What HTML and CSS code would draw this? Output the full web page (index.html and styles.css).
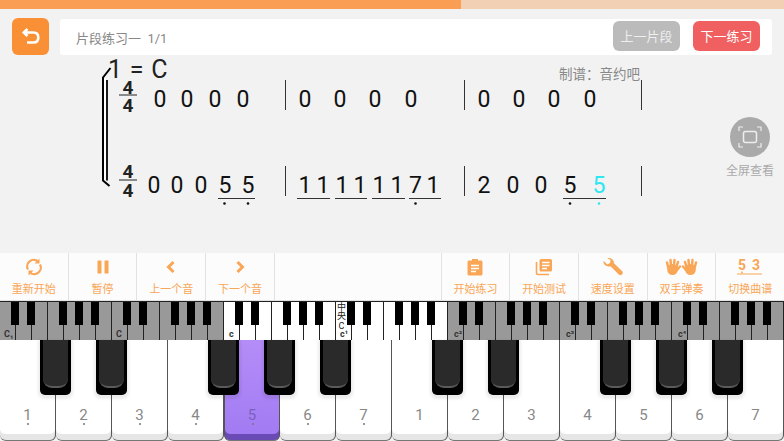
FILE: index.html
```html
<!DOCTYPE html>
<html lang="zh-CN">
<head>
    <meta charset="UTF-8">
    <meta name="viewport" content="width=device-width, initial-scale=1.0">
    <title>片段练习</title>
    <link rel="stylesheet" href="styles.css">
</head>
<body>
    <div class="progress"><div class="progress-fill"></div></div>

    <header class="top">
        <button class="back-btn">
            <svg width="20" height="18" viewBox="0 0 20 18"><path d="M6.500 1 2.800 4.500 6.500 8M3 4.500H12.500C15.500 4.500 17.300 6.500 17.300 9.500 17.300 12.500 15.500 14.500 12.500 14.500H6" fill="none" stroke="#fff" stroke-width="2.600"/></svg>
        </button>
        <div class="title-bar">
            <span class="title">片段练习一&nbsp;&nbsp;1/1</span>
            <button class="seg-btn prev">上一片段</button>
            <button class="seg-btn next">下一练习</button>
        </div>
    </header>

    <main class="score-area">
        <svg class="score" width="784" height="198" viewBox="0 55 784 198">
            <text class="key-sig" x="108" y="78">1 = C</text>

            <path d="M110.500 68 103 77.500V180.500L109.500 186" fill="none" stroke="#000" stroke-width="2"/>
            <path d="M104 78.500H106V180H104Z" fill="#fff"/>
            <path d="M107 80V180.500" fill="none" stroke="#000" stroke-width="1.800"/>

            <text class="time" x="128" y="93.500">4</text>
            <path d="M119 95H137M119 180H137" stroke="#222" stroke-width="1.200"/>
            <text class="time" x="128" y="111.500">4</text>
            <text class="time" x="128" y="178">4</text>
            <text class="time" x="128" y="196.500">4</text>

            <g class="notes">
                <text x="160" y="107">0</text><text x="187" y="107">0</text><text x="215" y="107">0</text><text x="243" y="107">0</text>
                <text x="305" y="107">0</text><text x="340" y="107">0</text><text x="375" y="107">0</text><text x="411" y="107">0</text>
                <text x="484" y="107">0</text><text x="519" y="107">0</text><text x="554" y="107">0</text><text x="590" y="107">0</text>

                <text x="154" y="193">0</text><text x="177" y="193">0</text><text x="201" y="193">0</text><text x="225" y="193">5</text><text x="248" y="193">5</text>
                <text x="305" y="193">1</text><text x="323" y="193">1</text><text x="342" y="193">1</text><text x="360" y="193">1</text><text x="379" y="193">1</text><text x="397" y="193">1</text><text x="415.500" y="193">7</text><text x="433" y="193">1</text>
                <text x="484" y="193">2</text><text x="513" y="193">0</text><text x="541" y="193">0</text><text x="570" y="193">5</text><text class="now" x="599" y="193">5</text>
            </g>

            <path class="bars" d="M285.500 80V110M464.500 80V110M641.500 80V110M285.500 166V196M464.500 166V196M641.500 166V196"/>
            <path class="beams" d="M218 198.500H255M297 198.500H330M335 198.500H367M372 198.500H405M409 198.500H441M563 198.500H606"/>
            <g class="dots">
                <circle cx="224.500" cy="203.500" r="1.300"/><circle cx="248" cy="203.500" r="1.300"/>
                <circle cx="415.500" cy="203.500" r="1.300"/><circle cx="570" cy="203.500" r="1.300"/>
                <circle class="now" cx="599" cy="203.500" r="1.300"/>
            </g>
        </svg>

        <div class="credit">制谱：音约吧</div>

        <div class="fullscreen">
            <div class="fs-circle">
                <svg width="24" height="22" viewBox="0 0 24 22" fill="none" stroke="#eee">
                    <path d="M1 5V1H5M19 1H23V5M23 17V21H19M5 21H1V17" stroke-width="1.200"/>
                    <rect x="5.500" y="5.500" width="13" height="11" rx="2" stroke-width="1.500"/>
                </svg>
            </div>
            <span>全屏查看</span>
        </div>
    </main>

    <nav class="toolbar">
        <div class="tool">
            <svg width="18" height="18" viewBox="0 0 18 18" fill="none" stroke="#f9a657" stroke-width="2.200"><path d="M3 11.500A6.500 6.500 0 0 1 13 3.500M15 6.500A6.500 6.500 0 0 1 5 14.500"/><path d="M14.500 0.500V5.500H9.500M3.500 17.500V12.500H8.500" fill="#f9a657" stroke="none"/></svg>
            <span>重新开始</span>
        </div>
        <div class="tool">
            <svg width="18" height="18" viewBox="0 0 18 18" fill="#f9a657"><rect x="3.500" y="2.500" width="4" height="13" rx="0.500"/><rect x="10.500" y="2.500" width="4" height="13" rx="0.500"/></svg>
            <span>暂停</span>
        </div>
        <div class="tool">
            <svg width="18" height="18" viewBox="0 0 18 18" fill="none" stroke="#f9a657" stroke-width="3"><path d="M11.500 4 6.500 9 11.500 14"/></svg>
            <span>上一个音</span>
        </div>
        <div class="tool">
            <svg width="18" height="18" viewBox="0 0 18 18" fill="none" stroke="#f9a657" stroke-width="3"><path d="M6.500 4 11.500 9 6.500 14"/></svg>
            <span>下一个音</span>
        </div>
        <div class="tool spacer"></div>
        <div class="tool">
            <svg width="18" height="18" viewBox="0 0 18 18"><path d="M3 2.500H6V1H12V2.500H15C15.800 2.500 16.500 3.200 16.500 4V16C16.500 16.800 15.800 17.500 15 17.500H3C2.200 17.500 1.500 16.800 1.500 16V4C1.500 3.200 2.200 2.500 3 2.500Z" fill="#f9a657"/><path d="M5 7.500H13M5 10.500H13M5 13.500H10" stroke="#fff" stroke-width="1.400"/></svg>
            <span>开始练习</span>
        </div>
        <div class="tool">
            <svg width="18" height="18" viewBox="0 0 18 18" fill="none" stroke="#f9a657"><rect x="4.500" y="1" width="12.500" height="12.500" rx="1.500" fill="#f9a657" stroke="none"/><path d="M1.500 4V15C1.500 16 2 16.500 3 16.500H14" stroke-width="1.600"/><path d="M7 4.500H14.500M7 7.500H14.500M7 10.500H12" stroke="#fff" stroke-width="1.300"/></svg>
            <span>开始测试</span>
        </div>
        <div class="tool">
            <svg width="20" height="18" viewBox="0 0 20 18"><path d="M0.500 3 4.500 6.500 7 5 7.500 2 4 0C7.500 -0.800 11.200 1.500 11 5.200L19 13C20 14 20 15.500 19 16.500 18 17.500 16.700 17.300 15.800 16.400L7.800 8.500C3.500 9 0 6.500 0.500 3Z" fill="#f9a657"/></svg>
            <span>速度设置</span>
        </div>
        <div class="tool">
            <svg width="33" height="18" viewBox="0 0 33 18" fill="#f9a657" stroke="#f9a657" stroke-linecap="round">
                <g id="hand">
                    <ellipse cx="7.500" cy="11.500" rx="5.300" ry="5.500" stroke="none"/>
                    <path d="M3.400 10 2 4.500M6 8 5.500 2M9 8 9.500 2M11.500 9 13 4M12 12 15 8.500" fill="none" stroke-width="2.500"/>
                </g>
                <use href="#hand" transform="matrix(-1 0 0 1 33 0)"/>
            </svg>
            <span>双手弹奏</span>
        </div>
        <div class="tool">
            <svg width="28" height="18" viewBox="0 0 28 18"><text class="jianpu" x="6" y="12">5</text><text class="jianpu" x="20" y="12">3</text><circle cx="6" cy="14.500" r="0.900" fill="#f9a657"/><path d="M1 16H26" stroke="#f9a657" stroke-width="1"/></svg>
            <span>切换曲谱</span>
        </div>
    </nav>

    <svg class="mini-keys" width="784" height="38" viewBox="0 0 784 38">
        <defs>
            <pattern id="octave" width="112" height="38" patternUnits="userSpaceOnUse">
                <path d="M15.500 0V38M31.500 0V38M47.500 0V38M63.500 0V38M79.500 0V38M95.500 0V38M111.500 0V38" stroke="#222" stroke-width="1"/>
                <path d="M11 0H19V23H11ZM27 0H35V23H27ZM59 0H67V23H59ZM75 0H83V23H75ZM91 0H99V23H91Z" fill="#000"/>
            </pattern>
        </defs>
        <rect width="784" height="38" fill="#fff"/>
        <rect x="0" width="224" height="38" fill="#999"/>
        <rect x="448" width="336" height="38" fill="#999"/>
        <rect width="784" height="38" fill="url(#octave)"/>
        <g class="mini-label">
            <text x="4" y="35">C₁</text><text x="116" y="35">C</text><text x="229" y="35">c</text>
            <text x="340" y="35">c¹</text><text x="454" y="35">c²</text><text x="566" y="35">c³</text><text x="678" y="35">c⁴</text>
        </g>
        <g class="middle-c">
            <text x="341.500" y="8">中</text><text x="341.500" y="17">央</text><text x="341.500" y="27">C</text>
        </g>
    </svg>

    <div class="keys">
        <div class="key low"><span class="num">1</span><i class="black"></i></div>
        <div class="key low"><span class="num">2</span><i class="black"></i></div>
        <div class="key low"><span class="num">3</span></div>
        <div class="key low"><span class="num">4</span><i class="black"></i></div>
        <div class="key low active"><span class="num">5</span><i class="black"></i></div>
        <div class="key low"><span class="num">6</span><i class="black"></i></div>
        <div class="key low"><span class="num">7</span></div>
        <div class="key"><span class="num">1</span><i class="black"></i></div>
        <div class="key"><span class="num">2</span><i class="black"></i></div>
        <div class="key"><span class="num">3</span></div>
        <div class="key"><span class="num">4</span><i class="black"></i></div>
        <div class="key"><span class="num">5</span><i class="black"></i></div>
        <div class="key"><span class="num">6</span><i class="black"></i></div>
        <div class="key"><span class="num">7</span></div>
    </div>
</body>
</html>
```

FILE: styles.css
```css
* {
    box-sizing: border-box;
}
html, body {
    margin: 0;
    height: 100%;
}
body {
    width: 784px;
    height: 441px;
    overflow: hidden;
    background: #f2f2f2;
    font-family: Roboto, 'Noto Sans CJK SC', sans-serif;
    display: flex;
    flex-direction: column;
}
button {
    border: none;
    padding: 0;
    font-family: inherit;
}
.progress {
    height: 9px;
    background: #f2d0b4;
}
.progress-fill {
    width: 461px;
    height: 100%;
    background: #fa9e53;
}
.top {
    display: flex;
    align-items: flex-start;
    gap: 11px;
    padding: 9px 12px 0;
    height: 46px;
}
.back-btn {
    width: 37px;
    height: 37px;
    border-radius: 6px;
    background: #fa9035;
    display: flex;
    align-items: center;
    justify-content: center;
}
.title-bar {
    width: 712px;
    height: 36px;
    margin-top: 1px;
    background: #fff;
    border-radius: 3px;
    display: flex;
    align-items: center;
    padding: 0 12px 0 16px;
    gap: 13px;
}
.title {
    flex: 1;
    font-size: 13px;
    color: #888;
}
.seg-btn {
    width: 67px;
    height: 30px;
    border-radius: 6px;
    margin-top: -3px;
    color: #fff;
    font-size: 13px;
}
.prev {
    background: #bbb;
    color: #eee;
}
.next {
    background: #f06060;
}
.score-area {
    position: relative;
    height: 198px;
}
.score {
    display: block;
}
.key-sig {
    font-size: 25px;
    word-spacing: 1.500px;
    fill: #222;
}
.time {
    font-size: 19px;
    font-weight: bold;
    text-anchor: middle;
    fill: #222;
}
.notes text {
    font-size: 23px;
    text-anchor: middle;
    fill: #111;
}
.notes .now {
    fill: #2ee6f0;
}
.bars {
    stroke: #333;
    stroke-width: 1;
}
.beams {
    stroke: #333;
    stroke-width: 1;
}
.dots circle {
    fill: #111;
}
.dots .now {
    fill: #2ee6f0;
}
.credit {
    position: absolute;
    left: 559px;
    top: 8px;
    font-size: 13.500px;
    color: #888;
}
.fullscreen {
    position: absolute;
    left: 726px;
    top: 62px;
    width: 48px;
    display: flex;
    flex-direction: column;
    align-items: center;
    gap: 4px;
    font-size: 12px;
    color: #aaa;
}
.fs-circle {
    width: 40px;
    height: 40px;
    border-radius: 50%;
    background: #aaa;
    display: flex;
    align-items: center;
    justify-content: center;
}
.toolbar {
    height: 48px;
    display: flex;
    gap: 1px;
    background: #e2e2e2;
    border-bottom: 1px solid #e2e2e2;
}
.tool {
    width: 67.750px;
    background: #fcfcfc;
    display: flex;
    flex-direction: column;
    align-items: center;
    padding-top: 5px;
    gap: 7px;
    font-size: 11px;
    line-height: 14px;
    color: #f9a657;
}
.spacer {
    width: 166px;
}
.jianpu {
    font-size: 14px;
    font-weight: bold;
    text-anchor: middle;
    fill: #f9a657;
}
.mini-keys {
    display: block;
    box-sizing: content-box;
    border-top: 1px solid #222;
}
.mini-label text {
    font-size: 9px;
    font-weight: bold;
    fill: #333;
}
.middle-c text {
    font-size: 9px;
    text-anchor: middle;
    fill: #222;
}
.keys {
    flex: 1;
    display: flex;
}
.key {
    position: relative;
    width: 56px;
    background: #e6e6e6;
    border-right: 1px solid #555;
    border-bottom: 1px solid #777;
    border-radius: 0 0 6px 6px;
    text-align: center;
    font-size: 15px;
    line-height: 20px;
    color: #888;
}
/* the top face of the key, the grey lip shows below it */
.key::before {
    content: "";
    position: absolute;
    left: 0;
    right: 0;
    top: 0;
    bottom: 6px;
    background: #fff;
    border-radius: 0 0 5px 5px;
}
.num {
    position: absolute;
    left: 0;
    right: 0;
    top: 65px;
}
.low .num::after {
    content: "";
    position: absolute;
    left: 27px;
    top: 18px;
    width: 2px;
    height: 2px;
    border-radius: 50%;
    background: #777;
}
.key.active {
    background: #6a4ab4;
    border-left: 1px solid #555;
    color: #7d5fc0;
}
.key.active::before {
    background: linear-gradient(#b58df8, #a27bf3);
}
.black {
    position: absolute;
    z-index: 2;
    top: 0;
    right: -16px;
    width: 31px;
    height: 55px;
    border-radius: 0 0 5px 5px;
    background: #000;
    box-shadow: 0 2px 3px 2px rgba(0, 0, 0, 0.08);
}
.black::before {
    content: "";
    position: absolute;
    left: 3px;
    right: 3px;
    top: 0;
    height: 46px;
    background: #2a2a2a;
    border-bottom: 2px solid #5a5a5a;
    border-radius: 0 0 9px 9px;
}
```
